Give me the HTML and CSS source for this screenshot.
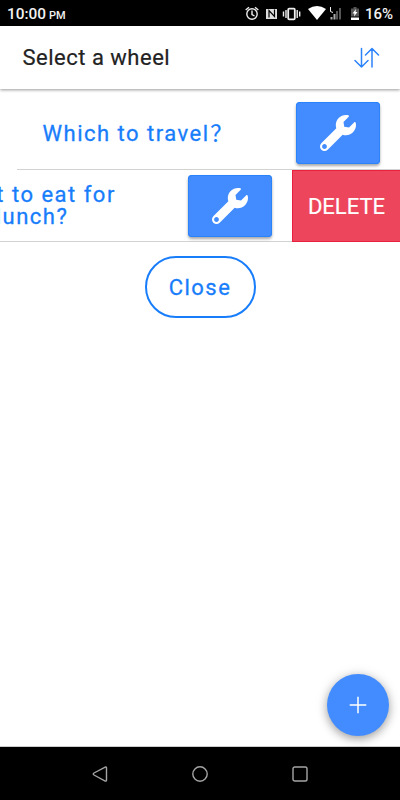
FILE: index.html
```html
<!DOCTYPE html>
<html lang="en">
<head>
<meta charset="utf-8">
<title>Select a wheel</title>
<link rel="stylesheet" href="styles.css">
</head>
<body>
<svg width="0" height="0" class="defs"><symbol id="wrench" viewBox="0 0 512 512"><path fill-rule="evenodd" d="M507.73 109.1c-2.24-9.03-13.54-12.09-20.12-5.51l-74.36 74.36-67.88-11.31-11.31-67.88 74.36-74.36c6.62-6.62 3.43-17.9-5.66-20.16-47.38-11.74-99.55.91-136.58 37.93-39.64 39.64-50.55 97.1-34.05 147.2L18.74 402.76c-24.99 24.99-24.99 65.51 0 90.5 24.99 24.99 65.51 24.99 90.5 0l213.21-213.21c50.12 16.71 107.47 5.68 147.37-34.22 37.07-37.07 49.7-89.32 37.91-136.73zM64 482c-18.800 0-34-15.200-34-34s15.200-34 34-34 34 15.200 34 34-15.200 34-34 34z"/></symbol></svg>
<div class="status">
  <span class="time">10:00 <small>PM</small></span>
  <svg class="status-icons" width="118" height="26" viewBox="244 0 118 26">
    <g fill="none" stroke="#eee" stroke-width="1.4">
      <circle cx="252" cy="14" r="5.2"/><path d="M252 10.500v4l2.500 1.500M245.700 10l3.300-2.800M258.300 10l-3.300-2.800"/>
      <rect x="288.200" y="8.700" width="6.600" height="10.600" rx="1" stroke-width="1.800"/><path d="M286 10v8M297.200 10v8M283.500 11.500v5M299.700 11.500v5"/>
    </g>
    <rect x="266" y="9" width="11" height="10" fill="#ddd"/>
    <path d="M269 17.500v-7l5.500 6v-7" fill="none" stroke="#000" stroke-width="1.200"/>
    <path d="M308 9q9-6 18 0l-9 11z" fill="#fff"/>
    <path d="M334.500 14v5.500M331.500 17v2.500" stroke="#aaa" stroke-width="2"/><path d="M330.500 7v4.500l2.500 1" fill="none" stroke="#eee"/>
    <path d="M337 11v8.500M340 8v11.500" stroke="#555" stroke-width="2"/>
    <path d="M353.500 7h3v1.500h2.500v8h-8v-8h2.500z" fill="#555"/><path d="M351 17.500h8v2.500h-8z" fill="#fff"/><path d="M356 9l-3.500 4.500h2l-.5 3 3.500-4.500h-2z" fill="#fff"/>
  </svg>
  <span class="battery">16%</span>
</div>
<header class="header">
  <h1>Select a wheel</h1>
  <svg width="26" height="22" viewBox="354 47 26 22" fill="none" stroke="#2b83fb" stroke-width="1.500" stroke-linecap="round" stroke-linejoin="round"><path d="M361.500 48.500v18.500M355 60.500l6.500 6.500 6.500-6.500M372 67v-18.500M365.500 55l6.500-6.500 6.500 6.500"/></svg>
</header>
<main class="content">
  <div class="row first">
    <span class="label">Which to travel<span class="mark">？</span></span>
    <button class="tool"><svg><use href="#wrench"/></svg></button>
  </div>
  <div class="row swiped">
    <div class="item">
      <span class="label">What to eat for lunch?</span>
      <button class="tool"><svg><use href="#wrench"/></svg></button>
    </div>
    <button class="delete">DELETE</button>
  </div>
  <button class="close">Close</button>
  <button class="fab"><svg width="18" height="18" viewBox="0 0 18 18"><path d="M9 .700v16.600M.700 9h16.600" stroke="#fff" stroke-width="1.500" fill="none"/></svg></button>
</main>
<nav class="nav">
  <svg width="16" height="16" viewBox="0 0 16 16"><path d="M13.200 1.200 2 7q-1.500 1 0 2l11.200 6q1.300.4 1.300-1V2q0-1.400-1.300-.8z"/></svg>
  <svg width="16" height="16" viewBox="0 0 16 16"><circle cx="8" cy="8" r="7.200"/></svg>
  <svg width="16" height="16" viewBox="0 0 16 16"><rect x="1" y="1" width="14" height="14" rx="1.800"/></svg>
</nav>
</body>
</html>
```
FILE: styles.css
```css
* { box-sizing: border-box; }
body {
  margin: 0;
  width: 400px;
  height: 800px;
  overflow: hidden;
  display: flex;
  flex-direction: column;
  background: #fff;
  font-family: Roboto, "Noto Sans CJK SC", sans-serif;
}
button { border: 0; padding: 0; font: inherit; }
.defs { position: absolute; }
.status {
  height: 26px;
  flex: none;
  display: flex;
  align-items: center;
  padding: 0 7px;
  background: #000;
  color: #f2f2f2;
  font-weight: 500;
}
.time { flex: 1; padding-top: 2px; font-size: 15.4px; }
.time small { font-size: 11px; margin-left: -1px; }
.battery { width: 31px; padding-top: 2px; white-space: nowrap; text-align: right; font-size: 15px; }
.header {
  height: 63px;
  flex: none;
  display: flex;
  align-items: center;
  justify-content: space-between;
  padding: 0 20px 0 22.5px;
  background: #fff;
  box-shadow: 0 1px 3px rgba(0, 0, 0, .4);
}
h1 {
  margin: 0;
  color: #222;
  font-size: 22px;
  font-weight: 400;
  letter-spacing: .5px;
  -webkit-text-stroke: .2px #222;
}
.content {
  flex: 1;
  display: flex;
  flex-direction: column;
  align-items: center;
  position: relative;
  border-bottom: 1px solid #ccc;
}
.row { display: flex; align-items: center; }
.first {
  width: 383px;
  height: 81px;
  align-self: flex-end;
  padding: 8px 20px 0 17px;
  border-bottom: 1px solid #d2d2d2;
}
.label {
  flex: 1;
  text-align: center;
  color: #187dfb;
  font-size: 22px;
  line-height: 22px;
  font-weight: 400;
  letter-spacing: 1.5px;
  -webkit-text-stroke: .3px #187dfb;
}
.first .label { text-align: left; margin-left: 8.5px; padding-top: 1px; white-space: nowrap; }
.mark { margin-left: .5px; -webkit-text-stroke: .2px #187dfb; }
.tool {
  width: 84px;
  height: 62px;
  flex: none;
  display: grid;
  place-items: center;
  border-radius: 4px;
  background: #428cff;
  box-shadow: 0 2px 3px rgba(0, 0, 0, .35), inset 0 0 0 1px #2b83fb;
}
.tool svg { width: 36px; height: 36px; fill: #fff; }
.swiped {
  width: 400px;
  height: 72px;
  justify-content: flex-end;
  border-bottom: 1px solid #d2d2d2;
}
.item { width: 383px; flex: none; display: flex; align-items: center; padding: 0 20px 0 17px; }
.item .label { padding: 0 50px 0 0; }
.delete {
  width: 108px;
  height: 72px;
  flex: none;
  background: #ed455c;
  border: solid #eb1f3e;
  border-width: 1px 0 1px 1px;
  color: #fff;
  font-size: 22px;
  padding-top: 1px;
  -webkit-text-stroke: .2px #fff;
}
.close {
  width: 111px;
  height: 62px;
  margin: 14px 0 0;
  border: 2px solid #187dfb;
  border-radius: 32px;
  background: #fff;
  color: #187dfb;
  font-size: 22px;
  letter-spacing: 1.5px;
  -webkit-text-stroke: .3px #187dfb;
}
.fab {
  position: absolute;
  right: 11px;
  bottom: 10.5px;
  width: 62px;
  height: 62px;
  display: grid;
  place-items: center;
  border-radius: 50%;
  background: #428cff;
  box-shadow: 0 3px 8px rgba(0, 0, 0, .3), 0 1px 14px rgba(0, 0, 0, .12);
}
.nav {
  height: 53px;
  flex: none;
  display: flex;
  justify-content: space-between;
  align-items: center;
  padding: 0 92px;
  background: #000;
}
.nav svg { fill: none; stroke: #a5a5a5; stroke-width: 1.4; }
```
